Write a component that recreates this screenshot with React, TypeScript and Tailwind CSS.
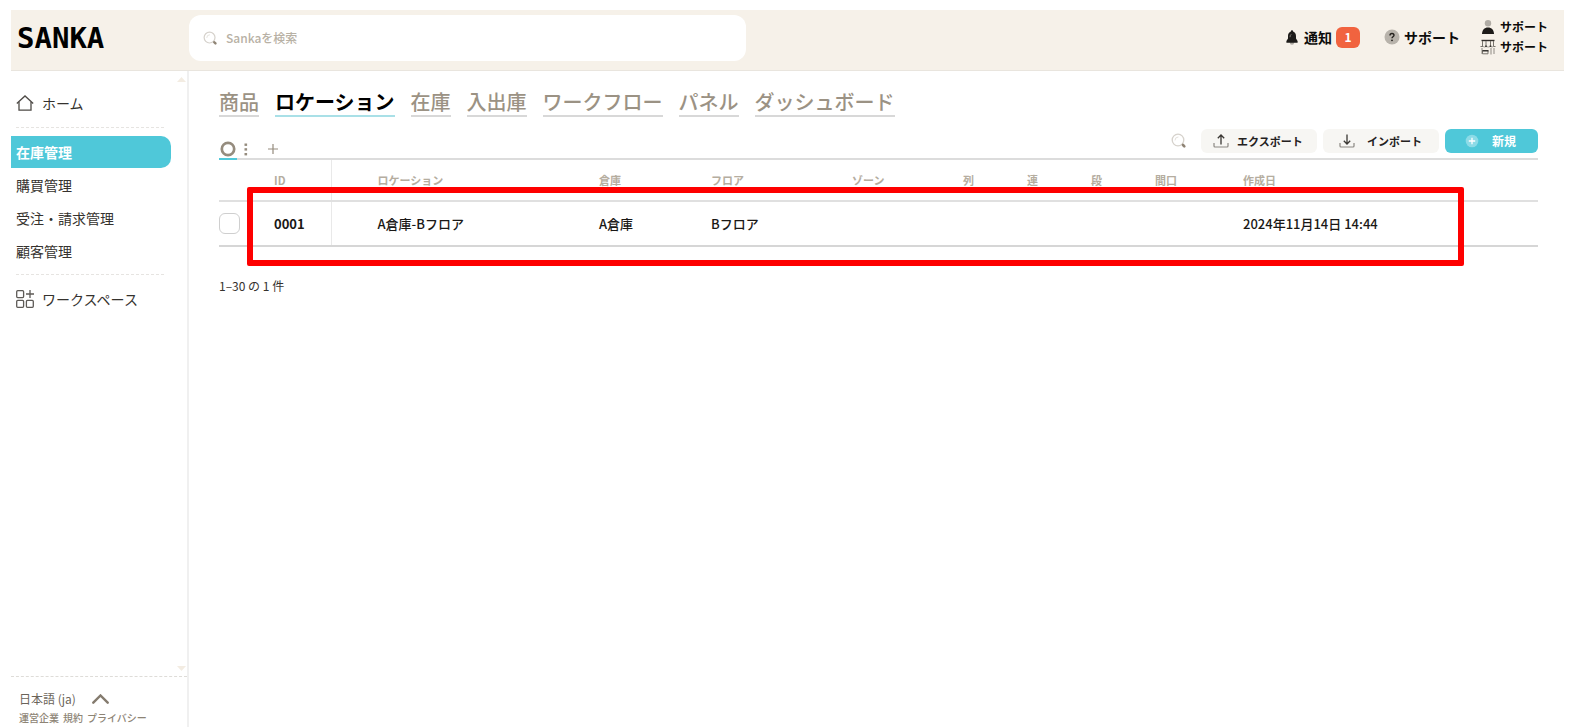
import type { ReactNode } from "react";

function SearchIcon({ size }: { size: number }) {
  return (
    <svg width={size} height={size} viewBox="0 0 16 16" fill="none" aria-hidden="true">
      <circle cx="7" cy="7" r="5.8" stroke="#d6d2cc" strokeWidth="1.3" />
      <path d="M4 7a3 3 0 0 1 3-3" stroke="#e4e1dc" strokeWidth="1" strokeLinecap="round" />
      <path d="M11.2 11.2l.8.8" stroke="#b9b2a8" strokeWidth="1.2" />
      <path d="M12 12l1.3 1.3" stroke="#8f8475" strokeWidth="2.6" strokeLinecap="round" />
    </svg>
  );
}

function BellIcon() {
  return (
    <svg width="12" height="15" viewBox="0 0 12 15" aria-hidden="true">
      <circle cx="6" cy="12.6" r="2.2" fill="#aaa69f" />
      <path d="M6 .3c.8 0 1.1.6 1.1 1.3C9 2.2 10 3.9 10 6v2.6L11.6 11v1.8H.4V11L2 8.6V6c0-2.1 1-3.8 2.9-4.4C4.9.9 5.2.3 6 .3z" fill="#1d1b19" />
      <path d="M4 7.2c0-1.3.4-2.2 1.2-2.9" stroke="#8d8a85" strokeWidth=".9" fill="none" />
    </svg>
  );
}

function HelpIcon() {
  return (
    <svg width="16" height="16" viewBox="0 0 16 16" fill="none" aria-hidden="true">
      <circle cx="8" cy="8" r="7.5" fill="#b8b3ab" />
      <path d="M6 6.5C6 5.2 6.9 4.5 8 4.5s2 .7 2 1.8c0 1.500-2 1.500-2 3" stroke="#24211d" strokeWidth="1.4" />
      <circle cx="8" cy="11.3" r=".9" fill="#24211d" />
    </svg>
  );
}

function UserIcon() {
  return (
    <svg width="16" height="16" viewBox="0 0 16 16" aria-hidden="true">
      <circle cx="8" cy="4.2" r="3.2" fill="#b0aca5" />
      <path d="M2 15c0-4 2.400-6.600 6-6.600s6 2.600 6 6.600z" fill="#1d1b19" />
    </svg>
  );
}

function ShopIcon() {
  return (
    <svg width="16" height="16" viewBox="0 0 16 16" fill="none" aria-hidden="true">
      <path d="M1.5 1.5h13" stroke="#33302c" strokeWidth="1.4" />
      <path d="M2.500 2v5.500M6 2v5M10.500 2v5M13.500 2v5.500" stroke="#77736c" />
      <path d="M.5 7.500h2.500M13 7.500h2.500" stroke="#77736c" />
      <path d="M3 7.500q1.500 1 3 0M6 7.500q2.200 1 4.500 0M10.500 7.500q1.500 1 3 0" stroke="#a29e97" />
      <path d="M5.200 7.300h1.600M9.700 7.300h1.600" stroke="#33302c" strokeWidth="1.4" />
      <path d="M2 9v6M11 9v6.500M14 9v6" stroke="#8e8a83" />
      <path d="M2.500 11.500h5.500V14.800h-5.500z" stroke="#77736c" />
      <path d="M2.500 11.800h6" stroke="#33302c" strokeWidth="1.4" />
    </svg>
  );
}

function HomeIcon() {
  return (
    <svg width="18" height="16" viewBox="0 0 18 16" fill="none" stroke="#4d4a46" strokeWidth="1.3" aria-hidden="true">
      <path d="M.8 8.400L9 .9l8.200 7.500" />
      <path d="M3 7v8.200h12V7" />
    </svg>
  );
}

function WorkspaceIcon() {
  return (
    <svg width="18" height="18" viewBox="0 0 18 18" fill="none" stroke="#5d5a56" strokeWidth="1.3" aria-hidden="true">
      <rect x=".7" y=".7" width="6.900" height="6.900" rx="1" />
      <rect x=".7" y="10.400" width="6.900" height="6.900" rx="1" />
      <rect x="10.400" y="10.400" width="6.900" height="6.900" rx="1" />
      <path d="M14 0v8M10 4h8" />
    </svg>
  );
}

function TransferIcon({ up }: { up?: boolean }) {
  return (
    <svg width="16" height="14" viewBox="0 0 16 14" fill="none" aria-hidden="true">
      <path d="M1 9v3q0 1 1 1h12q1 0 1-1V9" stroke="#8b8883" strokeWidth="1.2" />
      <path d={up ? "M8 10.500V1M4.800 4.200L8 1l3.200 3.200" : "M8 .5v9.500M4.800 6.800L8 10l3.200-3.200"} stroke="#3a3733" strokeWidth="1.3" />
    </svg>
  );
}

function AddIcon() {
  return (
    <svg width="14" height="14" viewBox="0 0 14 14" aria-hidden="true">
      <circle cx="7" cy="7" r="6.3" fill="#8cdbe7" />
      <path d="M7 3.800v6.400M3.800 7h6.400" stroke="#fff" strokeWidth="1.3" />
    </svg>
  );
}

const tabs = ["商品", "ロケーション", "在庫", "入出庫", "ワークフロー", "パネル", "ダッシュボード"];
const sections = ["在庫管理", "購買管理", "受注・請求管理", "顧客管理"];

function Header() {
  return (
    <header className="flex h-[61px] items-start border-b border-[#e9e5de] bg-[#f6f1e9] pr-4 pl-1.5">
      <a href="#" className="mt-3 w-[172px] shrink-0 font-['DejaVu_Sans_Mono',monospace] text-[29px] leading-8 font-bold text-black">
        SANKA
      </a>
      <label className="mt-[5px] flex h-[46px] w-[557px] items-center gap-2 rounded-xl bg-white px-3.5">
        <SearchIcon size={15} />
        <input type="search" aria-label="Sankaを検索" placeholder="Sankaを検索" className="min-w-0 flex-1 text-xs font-medium outline-none placeholder:text-[#b8b1a5]" />
      </label>
      <nav className="ml-auto flex items-start text-sm font-bold text-[#0d0c0b]">
        <a href="#" className="mt-[17px] flex items-center gap-1.5">
          <BellIcon />
          <span className="flex items-center gap-1">
            通知
            <span className="-my-px flex h-[21px] w-6 items-center justify-center rounded-md bg-[#f1633f] text-xs text-white">1</span>
          </span>
        </a>
        <a href="#" className="mt-[17px] ml-6 flex items-center gap-1">
          <HelpIcon />
          サポート
        </a>
        <div className="mt-[7px] ml-5 flex flex-col text-xs leading-5">
          <a href="#" className="flex items-center gap-1">
            <UserIcon />
            サポート
          </a>
          <a href="#" className="flex items-center gap-1">
            <ShopIcon />
            サポート
          </a>
        </div>
      </nav>
    </header>
  );
}

function Sidebar() {
  return (
    <aside className="flex w-[178px] shrink-0 flex-col border-r-2 border-[#f0f0f0] text-sm text-[#35322e]">
      <svg className="mt-1.5 mr-px self-end" width="9" height="5" viewBox="0 0 9 5" aria-hidden="true">
        <path d="M4.500 0L9 5H0z" fill="#f3ece2" />
      </svg>
      <nav className="flex flex-col">
        <a href="#" className="mt-[11px] flex h-5 items-center gap-2 pl-[5px]">
          <HomeIcon />
          ホーム
        </a>
        <hr className="mt-3.5 mr-[23px] ml-[5px] border-dashed border-[#e6e4e1]" />
        <ul className="mt-2 flex flex-col gap-px">
          {sections.map((name, i) => (
            <li key={name}>
              <a
                href="#"
                className={
                  i === 0
                    ? "mr-4 flex h-8 items-center rounded-r-[10px] bg-[#4fc8d9] pl-[5px] font-bold text-white"
                    : "mr-4 flex h-8 items-center pl-[5px]"
                }
              >
                {name}
              </a>
            </li>
          ))}
        </ul>
        <hr className="mt-[7px] mr-[23px] ml-[5px] border-dashed border-[#e6e4e1]" />
        <a href="#" className="mt-3.5 flex h-5 items-center gap-2 pl-[5px]">
          <WorkspaceIcon />
          ワークスペース
        </a>
      </nav>
      <svg className="mt-auto mr-px self-end" width="9" height="5" viewBox="0 0 9 5" aria-hidden="true">
        <path d="M0 0h9L4.500 5z" fill="#f3ece2" />
      </svg>
      <div className="mt-[5px] border-t border-dashed border-[#dedcd8] px-2 pt-3 text-[#6b645a]">
        <button type="button" className="flex items-center gap-4 text-xs leading-5">
          日本語 (ja)
          <svg width="17" height="10" viewBox="0 0 17 10" fill="none" stroke="#847b6e" strokeWidth="2.4" strokeLinecap="round" aria-hidden="true">
            <path d="M1.300 8.700L8.500 1.500l7.200 7.200" />
          </svg>
        </button>
        <div className="flex gap-1 text-[10px] leading-[18px] font-medium text-[#8d8475]">
          <a href="#">運営企業</a>
          <a href="#">規約</a>
          <a href="#">プライバシー</a>
        </div>
      </div>
    </aside>
  );
}

function ActionButton({ children }: { children: ReactNode }) {
  return (
    <button type="button" className="flex h-6 w-[116px] items-center gap-2 rounded-md bg-[#f7f6f3] px-3">
      {children}
    </button>
  );
}

function Toolbar() {
  return (
    <div className="mt-3 flex h-[31px] items-start border-b-2 border-[#dcdcdc]">
      <div className="-mb-0.5 flex self-end text-[#958c7e]">
        <button type="button" aria-label="ビュー" className="flex h-[21px] w-[18px] justify-center border-b-2 border-[#4fc8d9] pt-0.5">
          <svg width="16" height="16" viewBox="0 0 16 16" fill="none" aria-hidden="true">
            <circle cx="8" cy="8" r="6.2" stroke="currentColor" strokeWidth="2.7" />
          </svg>
        </button>
        <button type="button" aria-label="メニュー" className="ml-[7px] flex w-1 pt-1">
          <svg width="4" height="13" viewBox="0 0 4 13" fill="currentColor" aria-hidden="true">
            <rect x=".5" y=".5" width="2.600" height="2.400" />
            <rect x=".5" y="5.200" width="2.600" height="2.400" />
            <rect x=".5" y="10" width="2.600" height="2.400" />
          </svg>
        </button>
        <button type="button" aria-label="追加" className="ml-5 flex pt-[5px]">
          <svg width="10" height="10" viewBox="0 0 10 10" stroke="currentColor" strokeWidth="1.2" aria-hidden="true">
            <path d="M5 0v10M0 5h10" />
          </svg>
        </button>
      </div>
      <div className="ml-auto flex items-center gap-1.5 text-[11px] font-bold text-[#24211e]">
        <button type="button" aria-label="検索" className="mr-2">
          <SearchIcon size={16} />
        </button>
        <ActionButton>
          <TransferIcon up />
          エクスポート
        </ActionButton>
        <button type="button" className="flex h-6 w-[116px] items-center gap-3 rounded-md bg-[#f7f6f3] px-4">
          <TransferIcon />
          インポート
        </button>
        <button type="button" className="flex h-6 w-[93px] items-center justify-between rounded-md bg-[#4fc8d9] pr-[22px] pl-5 text-xs text-white">
          <AddIcon />
          新規
        </button>
      </div>
    </div>
  );
}

function LocationTable() {
  return (
    <div className="relative">
      <table className="w-full table-fixed border-collapse text-left">
        <colgroup>
          <col className="w-[55px]" />
          <col className="w-[57px]" />
          <col className="w-[268px]" />
          <col className="w-[112px]" />
          <col className="w-[141px]" />
          <col className="w-[111px]" />
          <col className="w-16" />
          <col className="w-16" />
          <col className="w-16" />
          <col className="w-[88px]" />
          <col />
        </colgroup>
        <thead>
          <tr className="h-[41px] border-b-2 border-[#e0e0e0] text-[11px] text-[#b5ad9f] [&>th]:p-0 [&>th]:font-bold">
            <th aria-label="選択" />
            <th className="border-r border-[#e9e9e9]">ID</th>
            <th><span className="pl-[46px]">ロケーション</span></th>
            <th>倉庫</th>
            <th>フロア</th>
            <th>ゾーン</th>
            <th>列</th>
            <th>連</th>
            <th>段</th>
            <th>間口</th>
            <th>作成日</th>
          </tr>
        </thead>
        <tbody>
          <tr className="h-[45px] border-b-2 border-[#d6d6d6] text-[13px] font-medium text-[#1a1816] [&>td]:p-0">
            <td>
              <input type="checkbox" aria-label="0001を選択" className="block size-[21px] appearance-none rounded-md border border-[#cfcfcf] bg-white" />
            </td>
            <td className="border-r border-[#e9e9e9] font-bold">0001</td>
            <td><span className="pl-[46px]">A倉庫-Bフロア</span></td>
            <td>A倉庫</td>
            <td>Bフロア</td>
            <td />
            <td />
            <td />
            <td />
            <td />
            <td>2024年11月14日 14:44</td>
          </tr>
        </tbody>
      </table>
      <div className="pointer-events-none absolute top-[27px] right-[74px] left-7 h-[79px] rounded-xs border-6 border-[#fe0000]" />
    </div>
  );
}

export default function App() {
  return (
    <div className="flex min-h-screen flex-col bg-white pt-2.5 pr-[7px] pl-[11px] font-['Noto_Sans_CJK_JP',sans-serif]">
      <Header />
      <div className="flex flex-1">
        <Sidebar />
        <main className="min-w-0 flex-1 pt-[18px] pr-[26px] pl-[30px]">
          <nav className="flex gap-4 text-xl leading-[26px] font-medium text-[#9b9284]">
            {tabs.map((name, i) => (
              <a
                key={name}
                href="#"
                className={i === 1 ? "border-b-2 border-[#a9e0e7] font-bold text-black" : "border-b-2 border-[#d8d8d8]"}
              >
                {name}
              </a>
            ))}
          </nav>
          <Toolbar />
          <LocationTable />
          <p className="mt-[29px] text-xs leading-5 text-[#35322e]">1–30 の 1 件</p>
        </main>
      </div>
    </div>
  );
}
